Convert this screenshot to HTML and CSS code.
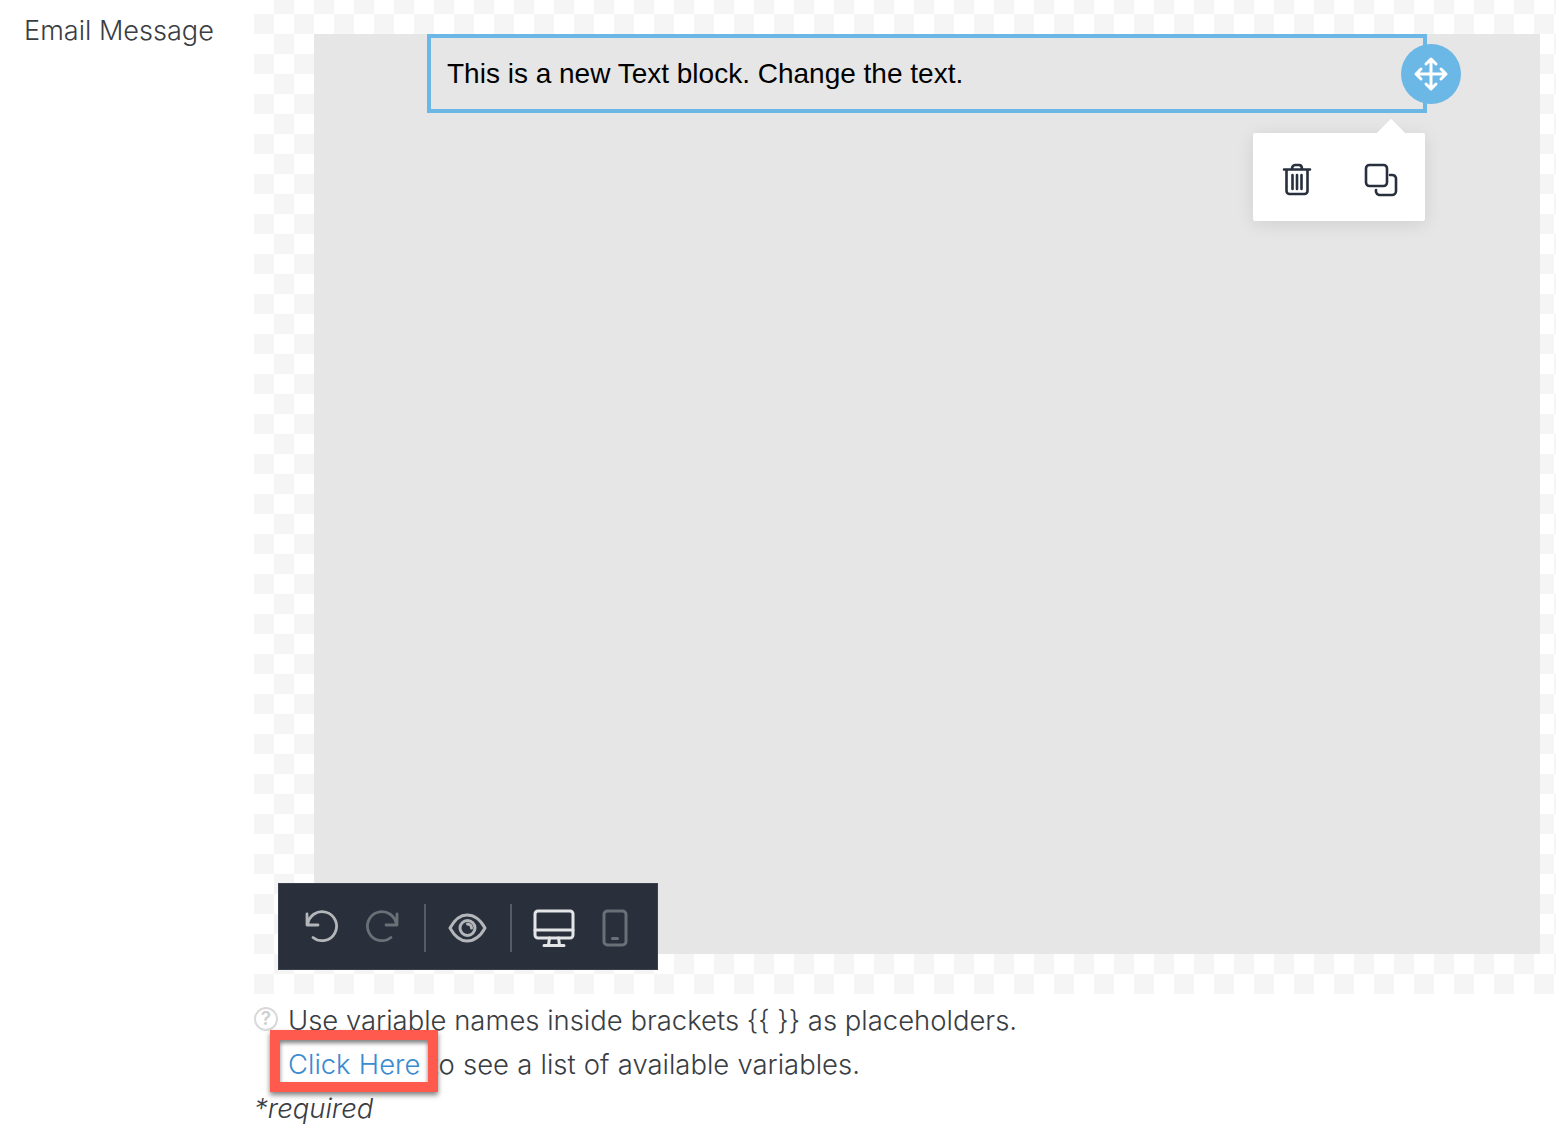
FILE: index.html
```html
<!DOCTYPE html>
<html lang="en">
<head>
<meta charset="utf-8">
<title>Email Message</title>
<link rel="stylesheet" href="styles.css">
</head>
<body>
<div class="field">
  <div class="label">Email Message</div>
  <div class="control">
    <div class="canvas">
      <div class="panel">
        <div class="block">This is a new Text block. Change the text.
          <div class="move">
            <svg width="36" height="36" viewBox="0 0 36 36" fill="none" stroke="#fff" stroke-width="3" stroke-linecap="round" stroke-linejoin="round"><path d="M18 3v30M3 18h30M13 8l5-5 5 5M13 28l5 5 5-5M8 13l-5 5 5 5M28 13l5 5-5 5"/></svg>
          </div>
          <div class="popup">
            <svg class="tool" width="30" height="36" viewBox="0 0 30 36" fill="none" stroke="#28303d" stroke-width="2.6" stroke-linecap="round" stroke-linejoin="round"><path d="M2 7.5h26M4.500 8v21a3 3 0 0 0 3 3h15a3 3 0 0 0 3-3V8M10 7c0-2 1-4 3-4h4c2 0 3 2 3 4M10.500 13v14M15 13v14M19.500 13v14"/></svg>
            <svg class="tool" width="34" height="34" viewBox="0 0 34 34" fill="none" stroke="#28303d" stroke-width="2.6" stroke-linecap="round" stroke-linejoin="round"><rect x="2" y="2" width="21" height="21" rx="3.5"/><path d="M26 12h2a4 4 0 0 1 4 3v13a4 4 0 0 1-4 4H15a4 4 0 0 1-3-3v-2"/></svg>
          </div>
        </div>
      </div>
      <div class="toolbar">
        <svg class="undo" width="36" height="36" viewBox="0 0 36 36" fill="none" stroke="#b4b6ba" stroke-width="2.8" stroke-linecap="round" stroke-linejoin="round"><path d="M3 4v11h11M3.600 15A14.500 14.500 0 1 1 9 27.500"/></svg>
        <svg class="redo" width="36" height="36" viewBox="0 0 36 36" fill="none" stroke="#6b6f76" stroke-width="2.8" stroke-linecap="round" stroke-linejoin="round"><path d="M33 4v11H22M32.400 15A14.500 14.500 0 1 0 27 27.500"/></svg>
        <span class="sep"></span>
        <svg class="eye" width="42" height="32" viewBox="0 0 42 32" fill="none" stroke="#b4b6ba" stroke-width="3" stroke-linejoin="round"><path d="M4 16C9 7 14 3 21 3s13 4 18 13c-5 9-11 13-18 13S9 25 4 16z"/><circle cx="21.500" cy="16" r="7.500"/><path d="M21.500 12a4 4 0 0 1 4 4" stroke-linecap="round"/></svg>
        <span class="sep second"></span>
        <svg class="desk" width="42" height="38" viewBox="0 0 42 38" fill="none" stroke="#e4e5e7" stroke-width="3" stroke-linecap="round" stroke-linejoin="round"><rect x="2" y="2" width="38" height="27" rx="3"/><path d="M2 21h38M16.500 29l-1 7M25.500 29l1 7M11 36.500h20"/></svg>
        <svg class="phone" width="26" height="38" viewBox="0 0 26 38" fill="none" stroke="#6b6f76" stroke-width="3" stroke-linecap="round" stroke-linejoin="round"><rect x="2" y="2" width="22" height="34" rx="3.500"/><path d="M10.500 29.500h5"/></svg>
      </div>
    </div>
    <div class="help">
      <p class="line"><span class="q">?</span>Use variable names inside brackets {{ }} as placeholders.</p>
      <p class="line indent"><a class="link" href="#">Click Here</a> to see a list of available variables.<span class="mark"></span></p>
      <p class="line req">*required</p>
    </div>
  </div>
</div>
</body>
</html>
```
FILE: styles.css
```css
html, body { margin: 0; padding: 0; background: #fff; }
body { width: 1556px; height: 1138px; overflow: hidden; font-family: "Liberation Sans", Arial, sans-serif; }
.field { display: flex; align-items: flex-start; }
.label { width: 254px; box-sizing: border-box; padding: 14px 0 0 24px; font-family: Inter, sans-serif; font-weight: 300; font-size: 27.1px; line-height: 34px; color: #3a3d42; }
.control { flex: 1; min-width: 0; }
.canvas { position: relative; height: 994px; box-sizing: border-box; padding: 34px 16px 40px 60px;
  background: conic-gradient(#fff 25%, #f5f5f5 0 50%, #fff 0 75%, #f5f5f5 0) 0 14px / 40px 40px; }
.panel { height: 100%; background: #e6e6e6; }
.block { position: relative; width: 1000px; height: 79px; box-sizing: border-box; margin: 0 auto; padding: 0 16px; border: 4px solid #6bb8e6; display: flex; align-items: center; font-size: 28px; color: #000; }
.move { position: absolute; right: -38px; top: 6px; width: 60px; height: 60px; border-radius: 50%; background: #6bb8e6; display: flex; align-items: center; justify-content: center; }
.popup { position: absolute; right: -2px; top: 95px; width: 172px; height: 88px; background: #fff; border-radius: 2px; box-shadow: 0 3px 18px rgba(0,0,0,.1); display: flex; align-items: center; justify-content: center; gap: 52px; }
.popup::before { content: ""; position: absolute; right: 24px; top: -10px; width: 20px; height: 20px; background: #fff; transform: rotate(45deg); }
.tool { position: relative; top: 3px; left: 1px; }
.toolbar { position: absolute; left: 24px; top: 883px; width: 380px; height: 87px; box-sizing: border-box; background: #29303b; border: 1px solid #3b424c; display: flex; align-items: center; padding: 2px 0 0 25px; }
.undo { margin-right: 24px; }
.sep { width: 2px; height: 48px; background: #565b64; margin: 0 20px 0 24px; }
.sep.second { margin: 0 21px 0 22px; }
.eye { display: block; }
.desk { margin-right: 27px; }
.help { padding: 4px 0 0; }
.line { margin: 0; font-family: Inter, sans-serif; font-weight: 300; font-size: 27.45px; line-height: 44px; color: #3a3d42; white-space: nowrap; position: relative; }
.indent { padding-left: 34px; word-spacing: .5px; }
.q { display: inline-block; width: 20px; height: 20px; margin-right: 10px; border: 2px solid #d9d9d9; border-radius: 50%; color: #cfcfcf; font-size: 19px; line-height: 20px; text-align: center; font-weight: 600; vertical-align: 5px; }
.link { color: #3b8bd0; text-decoration: none; margin-right: 2px; }
.mark { position: absolute; left: 16px; top: -12px; width: 168px; height: 62px; box-sizing: border-box; border: 10px solid #ff5a4d; box-shadow: 0 3px 5px rgba(0,0,0,.5), inset 0 3px 4px rgba(0,0,0,.5); }
.req { font-style: italic; }
```
